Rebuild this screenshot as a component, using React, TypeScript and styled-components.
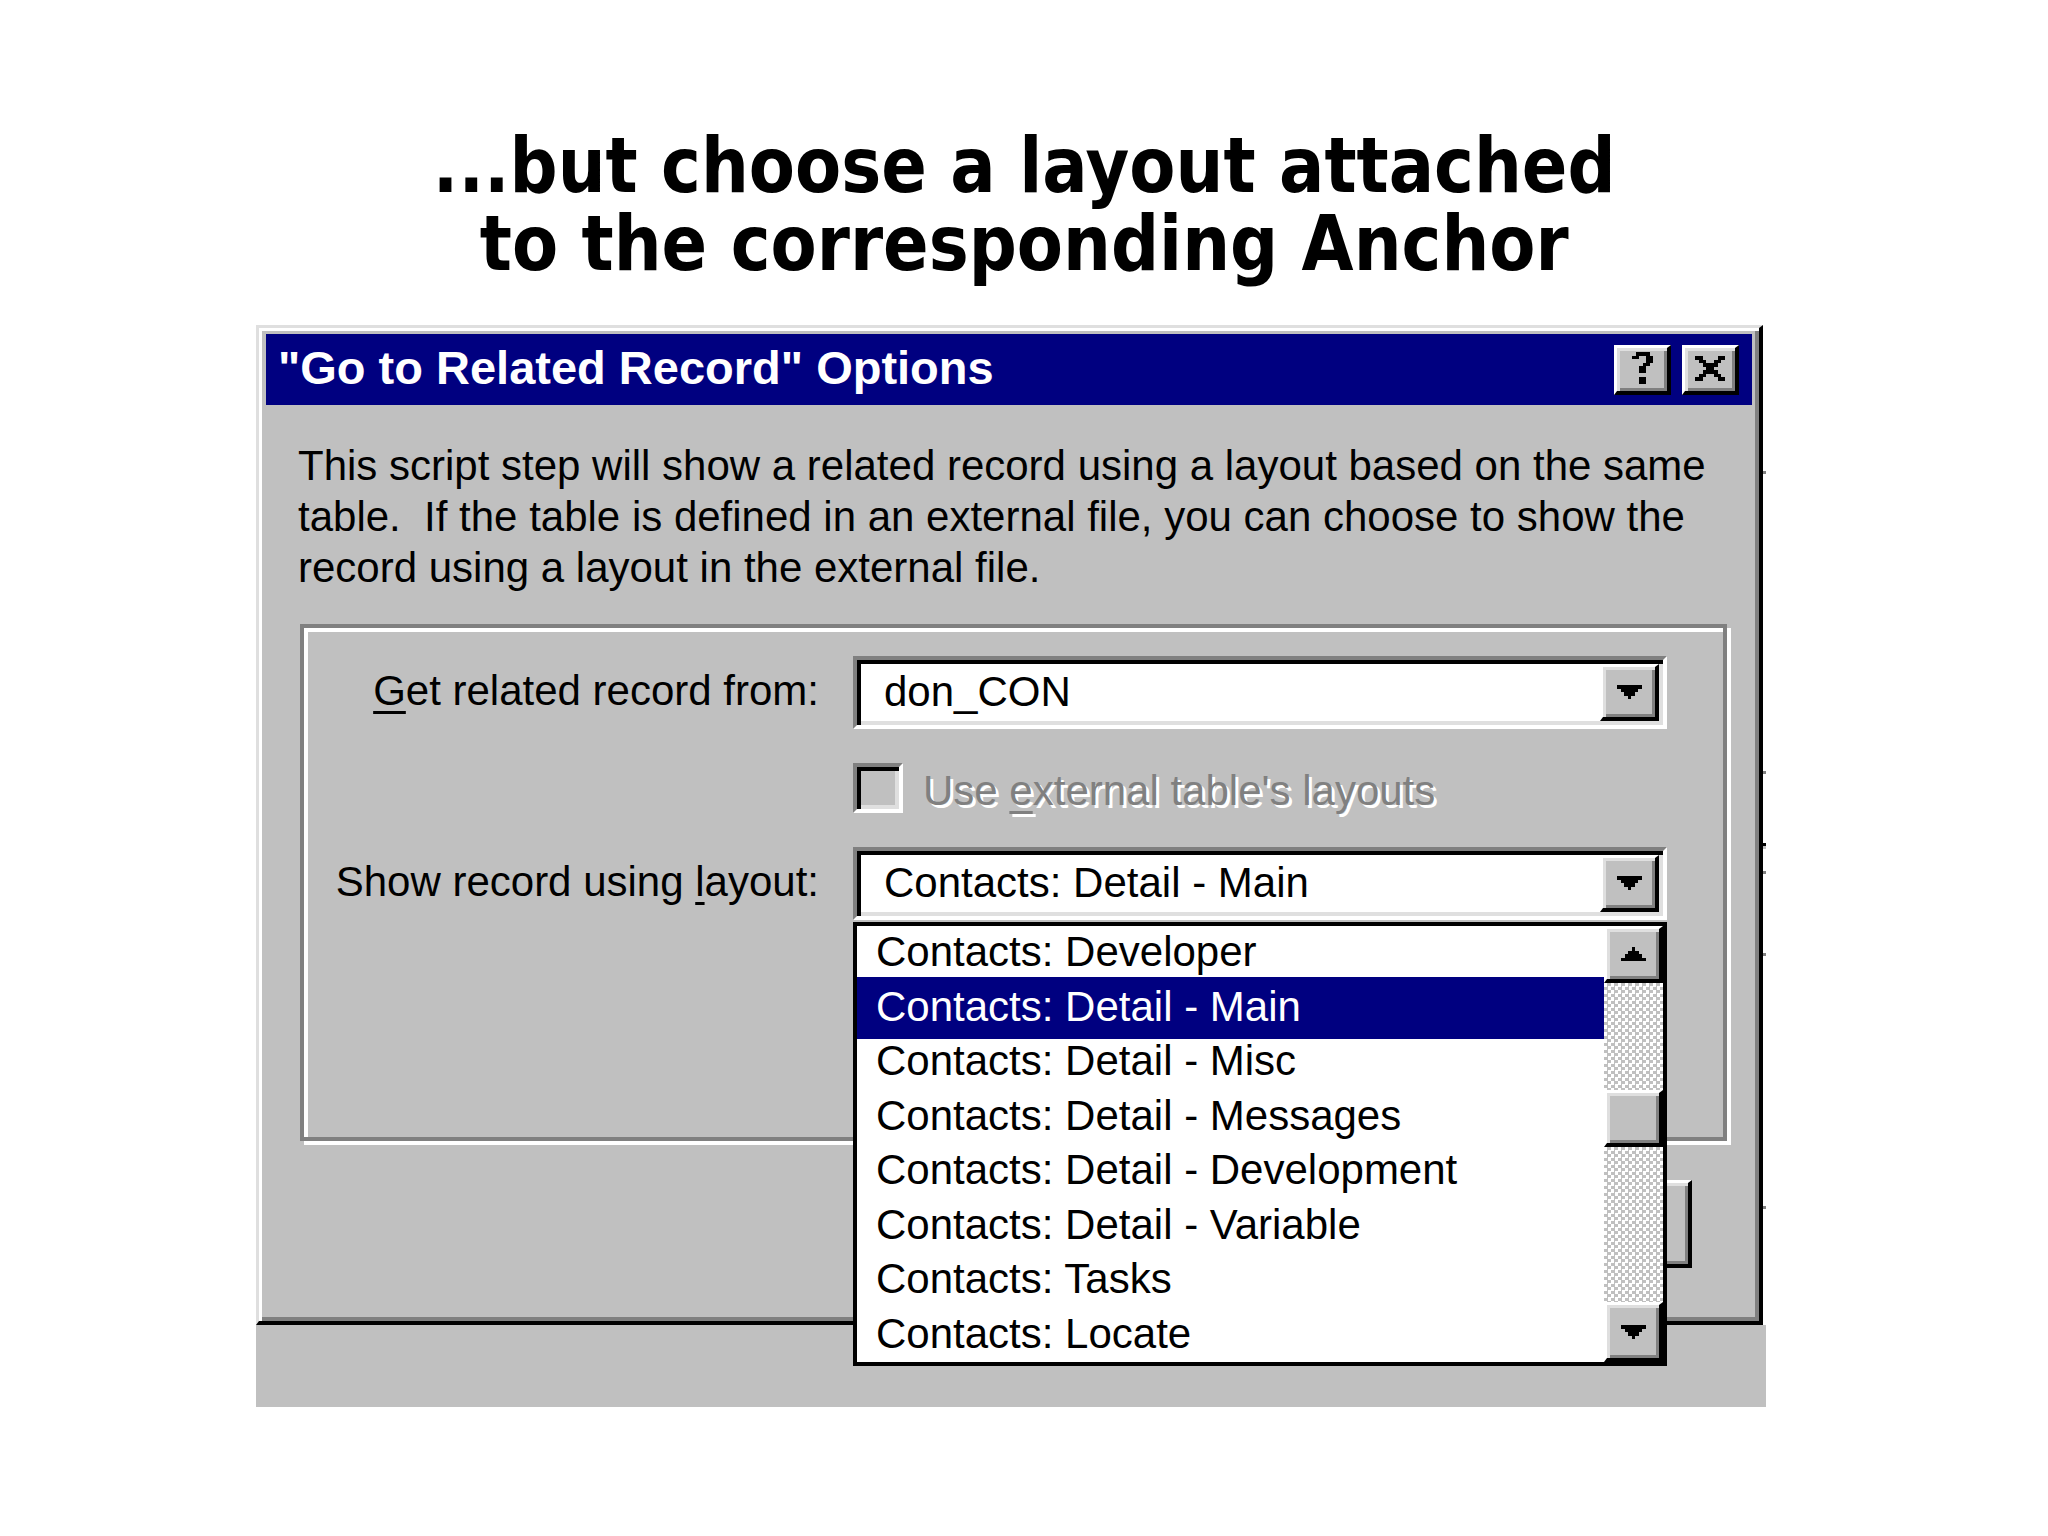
import React from "react";
import styled, { createGlobalStyle, css } from "styled-components";

const GlobalStyle = createGlobalStyle`
  html, body {
    margin: 0;
    padding: 0;
    background: #ffffff;
  }
  body {
    width: 2048px;
    height: 1536px;
    overflow: hidden;
  }
`;

const uiFont = `"Liberation Sans", Arial, sans-serif`;

/* ---------- pixel glyphs ---------- */

const pixelPath = (rows: string[]) =>
  rows
    .map((row, y) =>
      row
        .split("")
        .map((c, x) => (c === "#" ? `M${x} ${y}h1v1h-1z` : ""))
        .join("")
    )
    .join("");

const CLOSE_GLYPH = [
  "##....##",
  ".##..##.",
  "..####..",
  "...##...",
  "..####..",
  ".##..##.",
  "##....##",
];

const HELP_GLYPH = [
  ".####.",
  "##..##",
  "....##",
  "...##.",
  "..##..",
  "..##..",
  "......",
  "..##..",
  "..##..",
];

const DOWN_GLYPH = ["#######", ".#####.", "..###..", "...#..."];
const UP_GLYPH = ["...#...", "..###..", ".#####.", "#######"];

const GlyphSvg = styled.svg`
  display: block;
  shape-rendering: crispEdges;
`;

type GlyphProps = { rows: string[]; w: number; h: number };

const Glyph = ({ rows, w, h }: GlyphProps) => (
  <GlyphSvg
    width={w}
    height={h}
    viewBox={`0 0 ${rows[0].length} ${rows.length}`}
    preserveAspectRatio="none"
    aria-hidden
  >
    <path d={pixelPath(rows)} fill="#000" />
  </GlyphSvg>
);

/* ---------- page ---------- */

const Page = styled.main`
  display: flex;
  flex-direction: column;
  align-items: flex-start;
  width: 2048px;
  height: 1536px;
`;

const Heading = styled.h1`
  align-self: center;
  margin: 127px 0 0;
  font-family: "DejaVu Sans", Verdana, sans-serif;
  font-weight: 700;
  font-size: 76px;
  line-height: 78px;
  text-align: center;
  color: #000;
  white-space: nowrap;
  transform: scaleX(0.885);
`;

const Stage = styled.section`
  margin: 42px 0 0 256px;
  width: 1510px;
  display: flex;
  flex-direction: column;
  align-items: flex-start;
`;

const WindowRow = styled.div`
  display: flex;
  align-items: stretch;
`;

/* edges of the parent window's controls peeking out beside the dialog */
const tick = (y: number, a: string, b: string) =>
  `linear-gradient(${a}, ${a}) 0 ${y}px / 100% 3px no-repeat, linear-gradient(${b}, ${b}) 0 ${y + 3}px / 100% 3px no-repeat`;

const ParentEdge = styled.div`
  width: 3px;
  background: ${[
    tick(146, "#808080", "#ffffff"),
    tick(446, "#808080", "#ffffff"),
    tick(518, "#000000", "#c0c0c0"),
    tick(546, "#808080", "#ffffff"),
    tick(628, "#808080", "#ffffff"),
    tick(881, "#808080", "#ffffff"),
  ].join(", ")};
`;

/* ---------- bevels ---------- */

const raised = css`
  box-sizing: border-box;
  background: #c0c0c0;
  border-style: solid;
  border-width: 3px 4px 4px 3px;
  border-color: #ffffff #000000 #000000 #ffffff;
  box-shadow: inset 3px 3px 0 #dfdfdf, inset -3px -3px 0 #808080;
`;

const sunken = css`
  box-sizing: border-box;
  border-style: solid;
  border-width: 4px;
  border-color: #808080 #ffffff #ffffff #808080;
  box-shadow: inset 4px 4px 0 #000000, inset -4px -4px 0 #dfdfdf;
`;

/* ---------- dialog window ---------- */

const Dialog = styled.div`
  box-sizing: border-box;
  width: 1507px;
  background: #c0c0c0;
  border-style: solid;
  border-width: 3px 4px 4px 3px;
  border-color: #dfdfdf #000000 #000000 #dfdfdf;
  box-shadow: inset 3px 3px 0 #ffffff, inset -4px -4px 0 #808080;
  padding: 6px 7px 4px 7px;
  display: flex;
  flex-direction: column;
`;

const TitleBar = styled.div`
  height: 71px;
  background: #000080;
  display: flex;
  align-items: center;
  gap: 11px;
  padding: 0 13px 0 12px;
`;

const TitleText = styled.div`
  flex: 1;
  color: #ffffff;
  font-family: ${uiFont};
  font-weight: 700;
  font-size: 47px;
  padding-bottom: 5px;
  white-space: nowrap;
`;

const CaptionButton = styled.div`
  ${raised};
  width: 57px;
  height: 50px;
  display: flex;
  align-items: center;
  justify-content: center;
  padding-bottom: 2px;
`;

const Body = styled.div`
  display: flex;
  flex-direction: column;
  align-items: flex-start;
  padding: 35px 0 49px;
`;

const Intro = styled.p`
  margin: 0 0 0 32px;
  font-family: ${uiFont};
  font-size: 42px;
  line-height: 51px;
  white-space: pre;
  color: #000;
`;

const Group = styled.div`
  box-sizing: border-box;
  margin: 31px 0 0 34px;
  width: 1427px;
  height: 517px;
  border: 4px solid #808080;
  box-shadow: inset 4px 4px 0 #ffffff, 4px 4px 0 #ffffff;
  display: grid;
  grid-template-columns: 515px 814px;
  grid-template-rows: 73px 50px 73px;
  column-gap: 34px;
  row-gap: 34px;
  align-content: start;
  padding: 28px 56px 0 0;
`;

const FieldLabel = styled.label`
  justify-self: end;
  align-self: center;
  font-family: ${uiFont};
  font-size: 42px;
  color: #000;
  white-space: nowrap;
  padding-bottom: 4px;
`;

const Key = styled.span`
  text-decoration: underline;
  text-decoration-thickness: 3px;
  text-underline-offset: 6px;
`;

const Combo = styled.div`
  ${sunken};
  position: relative;
  background: #ffffff;
  padding: 4px;
  display: flex;
  align-items: stretch;
`;

const ComboValue = styled.div`
  flex: 1;
  display: flex;
  align-items: center;
  padding: 0 0 2px 23px;
  font-family: ${uiFont};
  font-size: 42px;
  color: #000;
  white-space: nowrap;
`;

const ArrowButton = styled.div<{ $h?: number }>`
  ${raised};
  width: 59px;
  flex: none;
  height: ${(p) => (p.$h ? `${p.$h}px` : "auto")};
  display: flex;
  align-items: center;
  justify-content: center;
`;

const CheckRow = styled.div`
  grid-column: 2;
  display: flex;
  align-items: center;
  gap: 20px;
`;

const CheckBox = styled.span`
  ${sunken};
  display: block;
  width: 50px;
  height: 50px;
  background: #c0c0c0;
`;

const DisabledLabel = styled.span`
  font-family: ${uiFont};
  font-size: 42px;
  color: #808080;
  text-shadow: 3px 3px 0 #ffffff;
  white-space: nowrap;
  padding-top: 6px;
`;

/* ---------- dropdown list ---------- */

const DropList = styled.div`
  position: absolute;
  top: calc(100% + 6px);
  left: -4px;
  z-index: 5;
  box-sizing: border-box;
  width: 814px;
  height: 444px;
  border: 4px solid #000000;
  background: #ffffff;
  display: flex;
`;

const Items = styled.ul`
  flex: 1;
  margin: 0;
  padding: 0;
  list-style: none;
  display: flex;
  flex-direction: column;
`;

const Item = styled.li<{ $selected?: boolean }>`
  position: relative;
  height: 54.5px;
  line-height: 52px;
  padding-left: 19px;
  font-family: ${uiFont};
  font-size: 42px;
  white-space: nowrap;
  color: ${(p) => (p.$selected ? "#ffffff" : "#000000")};
  background: ${(p) => (p.$selected ? "#000080" : "transparent")};
  box-shadow: ${(p) =>
    p.$selected ? "0 -4px 0 #000080, 0 4px 0 #000080" : "none"};
`;

const ScrollBar = styled.div`
  width: 59px;
  flex: none;
  display: flex;
  flex-direction: column;
`;

const Track = styled.div<{ $h: number }>`
  height: ${(p) => p.$h}px;
  background: repeating-conic-gradient(#c0c0c0 0 25%, #ffffff 0 50%) 0 0 /
    7px 7px;
`;

const Thumb = styled.div`
  ${raised};
  height: 57px;
`;

/* ---------- dialog buttons (behind the open list) & parent window ---------- */

const ButtonRow = styled.div`
  align-self: stretch;
  display: flex;
  justify-content: flex-end;
  gap: 24px;
  margin-top: 39px;
  padding-right: 60px;
`;

const PushButton = styled.div`
  ${raised};
  width: 320px;
  height: 88px;
`;

const ParentWindow = styled.div`
  width: 1510px;
  height: 82px;
  background: #c0c0c0;
`;

const layouts = [
  "Contacts: Developer",
  "Contacts: Detail - Main",
  "Contacts: Detail - Misc",
  "Contacts: Detail - Messages",
  "Contacts: Detail - Development",
  "Contacts: Detail - Variable",
  "Contacts: Tasks",
  "Contacts: Locate",
];

export default function App() {
  return (
    <>
      <GlobalStyle />
      <Page>
        <Heading>
          ...but choose a layout attached
          <br />
          to the corresponding Anchor
        </Heading>
        <Stage>
          <WindowRow>
            <Dialog>
              <TitleBar>
                <TitleText>"Go to Related Record" Options</TitleText>
                <CaptionButton>
                  <Glyph rows={HELP_GLYPH} w={21} h={32} />
                </CaptionButton>
                <CaptionButton>
                  <Glyph rows={CLOSE_GLYPH} w={30} h={25} />
                </CaptionButton>
              </TitleBar>
              <Body>
                <Intro>
                  {"This script step will show a related record using a layout based on the same\n" +
                    "table.  If the table is defined in an external file, you can choose to show the\n" +
                    "record using a layout in the external file."}
                </Intro>
                <Group>
                  <FieldLabel>
                    <Key>G</Key>et related record from:
                  </FieldLabel>
                  <Combo>
                    <ComboValue>don_CON</ComboValue>
                    <ArrowButton>
                      <Glyph rows={DOWN_GLYPH} w={25} h={14} />
                    </ArrowButton>
                  </Combo>
                  <CheckRow>
                    <CheckBox />
                    <DisabledLabel>
                      Use <Key>e</Key>xternal table's layouts
                    </DisabledLabel>
                  </CheckRow>
                  <FieldLabel>
                    Show record using <Key>l</Key>ayout:
                  </FieldLabel>
                  <Combo>
                    <ComboValue>Contacts: Detail - Main</ComboValue>
                    <ArrowButton>
                      <Glyph rows={DOWN_GLYPH} w={25} h={14} />
                    </ArrowButton>
                    <DropList>
                      <Items>
                        {layouts.map((name) => (
                          <Item key={name} $selected={name === "Contacts: Detail - Main"}>
                            {name}
                          </Item>
                        ))}
                      </Items>
                      <ScrollBar>
                        <ArrowButton $h={57}>
                          <Glyph rows={UP_GLYPH} w={25} h={14} />
                        </ArrowButton>
                        <Track $h={107} />
                        <Thumb />
                        <Track $h={155} />
                        <ArrowButton $h={60}>
                          <Glyph rows={DOWN_GLYPH} w={25} h={14} />
                        </ArrowButton>
                      </ScrollBar>
                    </DropList>
                  </Combo>
                </Group>
                <ButtonRow>
                  <PushButton />
                  <PushButton />
                </ButtonRow>
              </Body>
            </Dialog>
            <ParentEdge />
          </WindowRow>
          <ParentWindow />
        </Stage>
      </Page>
    </>
  );
}
